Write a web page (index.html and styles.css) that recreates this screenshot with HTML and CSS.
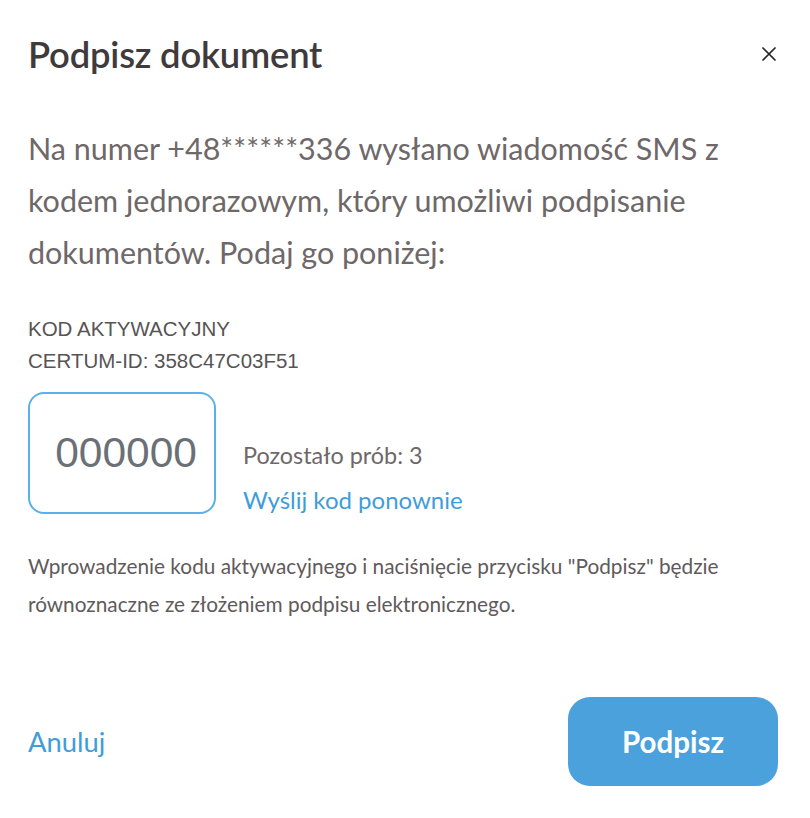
FILE: index.html
```html
<!DOCTYPE html>
<html lang="pl">
<head>
<meta charset="utf-8">
<title>Podpisz dokument</title>
<link rel="stylesheet" href="styles.css">
</head>
<body>
<div class="modal">
  <header class="modal-header">
    <h1 class="title">Podpisz dokument</h1>
    <button class="close" aria-label="Zamknij">
      <svg width="14" height="14" viewBox="0 0 14 14"><path d="M1 1 L13 13 M13 1 L1 13" stroke="#222" stroke-width="1.7" stroke-linecap="round"/></svg>
    </button>
  </header>
  <p class="lead">Na numer +48******336 wysłano wiadomość SMS z kodem jednorazowym, który umożliwi podpisanie dokumentów. Podaj go poniżej:</p>
  <div class="label">KOD AKTYWACYJNY<br>CERTUM-ID: 358C47C03F51</div>
  <div class="code-row">
    <div class="code-box">000000</div>
    <div class="code-side">
      <div class="attempts">Pozostało prób: 3</div>
      <a class="resend" href="#">Wyślij kod ponownie</a>
    </div>
  </div>
  <p class="note">Wprowadzenie kodu aktywacyjnego i naciśnięcie przycisku "Podpisz" będzie równoznaczne ze złożeniem podpisu elektronicznego.</p>
  <footer class="actions">
    <a class="cancel" href="#">Anuluj</a>
    <button class="sign">Podpisz</button>
  </footer>
</div>
</body>
</html>
```
FILE: styles.css
```css
html, body { margin: 0; padding: 0; background: #fff; }
body { font-family: "Lato", "Liberation Sans", sans-serif; }
.modal { width: 810px; box-sizing: border-box; padding: 0 32px 0 28px; }
.modal-header { display: flex; justify-content: space-between; align-items: center; height: 108px; }
.title { margin: 0; font-size: 36.4px; font-weight: 600; color: #3f3a3b; letter-spacing: -0.2px; }
.close { background: none; border: 0; padding: 0; margin-right: 2px; display: flex; cursor: pointer; }
.lead { margin: 14px 0 0; font-size: 30.5px; line-height: 52px; color: #6e6869; width: 730px; }
.label { margin-top: 35px; font-family: "Liberation Sans", sans-serif; font-size: 20.5px; line-height: 32px; color: #575455; }
.code-row { display: flex; align-items: flex-start; gap: 27px; margin-top: 15px; }
.code-box { width: 188px; height: 122px; box-sizing: border-box; border: 2px solid #5cb0ea; border-radius: 16px; display: flex; align-items: center; justify-content: flex-end; padding-right: 17px; font-family: "Liberation Sans", sans-serif; font-size: 42.5px; color: #6b7076; }
.code-side { display: flex; flex-direction: column; gap: 17px; padding-top: 49px; }
.attempts { font-size: 23.4px; line-height: 28px; color: #6e6869; }
.resend { font-size: 24px; line-height: 28px; color: #3f9ddb; text-decoration: none; }
.note { margin: 33px 0 0; font-size: 20.8px; line-height: 38px; color: #5f5a5b; width: 730px; }
.actions { display: flex; justify-content: space-between; align-items: center; margin-top: 74px; }
.cancel { font-size: 27.4px; color: #3f9ddb; text-decoration: none; }
.sign { width: 210px; height: 89px; border: 0; border-radius: 22px; background: #4aa1db; color: #fff; font-family: inherit; font-size: 29.5px; font-weight: 700; cursor: pointer; }
```
